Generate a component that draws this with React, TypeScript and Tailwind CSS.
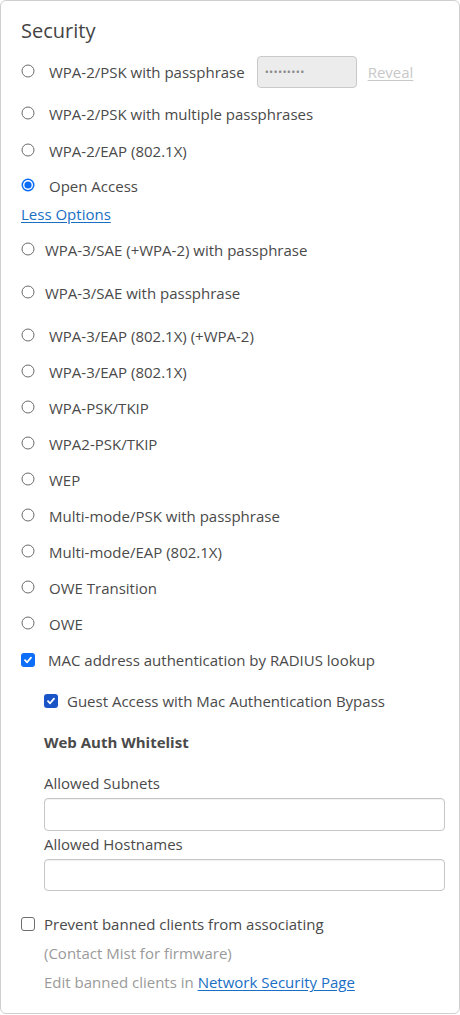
import React from "react";

const font = { fontFamily: '"Open Sans", "Noto Sans", sans-serif' };

function Radio({ checked = false }: { checked?: boolean }) {
  return (
    <svg width="14" height="14" viewBox="0 0 14 14" className="shrink-0 -translate-y-[1px]">
      {checked ? (
        <>
          <circle cx="7" cy="7" r="6.5" fill="#0a6cf5" />
          <circle cx="7" cy="7" r="5" fill="#fff" />
          <circle cx="7" cy="7" r="3.6" fill="#0a6cf5" />
        </>
      ) : (
        <circle cx="7" cy="7" r="6" fill="#fff" stroke="#6b6b6b" strokeWidth="1" />
      )}
    </svg>
  );
}

function Checkbox({ checked = false, dark = false }: { checked?: boolean; dark?: boolean }) {
  if (!checked) {
    return <span className="block h-[14px] w-[14px] shrink-0 rounded-[3px] border border-[#6f6f6f] bg-white" />;
  }
  return (
    <span
      className={`flex h-[14px] w-[14px] shrink-0 items-center justify-center rounded-[3px] ${
        dark ? "bg-[#1a55c8]" : "bg-[#0d6ef7]"
      }`}
    >
      <svg width="10" height="10" viewBox="0 0 10 10">
        <path d="M2 5.2 L4.1 7.3 L8 2.6" fill="none" stroke="#fff" strokeWidth="1.8" strokeLinecap="round" strokeLinejoin="round" />
      </svg>
    </span>
  );
}

const more = [
  { label: "WPA-3/SAE (+WPA-2) with passphrase", mt: "mt-[16px]", gap: "gap-[10px]" },
  { label: "WPA-3/SAE with passphrase", mt: "mt-[23px]", gap: "gap-[10px]" },
  { label: "WPA-3/EAP (802.1X) (+WPA-2)", mt: "mt-[23px]", gap: "gap-[14px]" },
  { label: "WPA-3/EAP (802.1X)", mt: "mt-[16px]", gap: "gap-[14px]" },
  { label: "WPA-PSK/TKIP", mt: "mt-[16px]", gap: "gap-[14px]" },
  { label: "WPA2-PSK/TKIP", mt: "mt-[16px]", gap: "gap-[14px]" },
  { label: "WEP", mt: "mt-[16px]", gap: "gap-[14px]" },
  { label: "Multi-mode/PSK with passphrase", mt: "mt-[16px]", gap: "gap-[14px]" },
  { label: "Multi-mode/EAP (802.1X)", mt: "mt-[16px]", gap: "gap-[14px]" },
  { label: "OWE Transition", mt: "mt-[16px]", gap: "gap-[14px]" },
  { label: "OWE", mt: "mt-[16px]", gap: "gap-[14px]" },
];

export default function App() {
  return (
    <div style={font} className="h-[1014px] w-[460px] bg-white">
      <div className="flex h-full flex-col rounded-[6px] border border-[#cfcfcf] pl-[20px] pt-[16px] text-[15px] text-[#4a4a4a]">
        <div className="h-[28px] text-[20px] leading-[28px] text-[#444]">Security</div>

        {/* main options */}
        <div className="mt-[11px] flex h-[32px] items-center gap-[14px]">
          <Radio />
          <span className="leading-[20px]">WPA-2/PSK with passphrase</span>
          <div className="-ml-[2px] flex h-[32px] w-[100px] items-center rounded-[4px] border border-[#c9c9c9] bg-[#ececec] pl-[7px] text-[11px] tracking-[0.3px] text-[#8a8a8a]">
            •••••••••
          </div>
          <span className="-ml-[3px] text-[#c8c8c8] underline underline-offset-2">Reveal</span>
        </div>
        <div className="mt-[16px] flex h-[20px] items-center gap-[14px]">
          <Radio />
          <span>WPA-2/PSK with multiple passphrases</span>
        </div>
        <div className="mt-[17px] flex h-[20px] items-center gap-[14px]">
          <Radio />
          <span>WPA-2/EAP (802.1X)</span>
        </div>
        <div className="mt-[15px] flex h-[20px] items-center gap-[14px]">
          <Radio checked />
          <span>Open Access</span>
        </div>
        <a className="mt-[8px] block h-[20px] leading-[20px] text-[#1a6fc4] underline underline-offset-2">Less Options</a>

        {more.map((o) => (
          <div key={o.label} className={`${o.mt} flex h-[20px] items-center ${o.gap}`}>
            <Radio />
            <span>{o.label}</span>
          </div>
        ))}

        {/* MAC auth */}
        <div className="mt-[16px] flex h-[20px] items-center gap-[13px]">
          <Checkbox checked />
          <span>MAC address authentication by RADIUS lookup</span>
        </div>
        <div className="ml-[23px] mt-[21px] flex h-[20px] items-center gap-[9px]">
          <Checkbox checked dark />
          <span>Guest Access with Mac Authentication Bypass</span>
        </div>

        <div className="ml-[23px] mr-[14px] flex flex-col">
          <div className="mt-[21px] h-[20px] font-bold leading-[20px]">Web Auth Whitelist</div>
          <div className="mt-[21px] h-[20px] leading-[20px]">Allowed Subnets</div>
          <div className="mt-[5px] h-[33px] rounded-[4px] border border-[#c6c6c6] bg-white shadow-[inset_0_1px_1px_rgba(0,0,0,0.06)]" />
          <div className="mt-[3px] h-[20px] leading-[20px]">Allowed Hostnames</div>
          <div className="mt-[5px] h-[32px] rounded-[4px] border border-[#c6c6c6] bg-white shadow-[inset_0_1px_1px_rgba(0,0,0,0.06)]" />
        </div>

        <div className="mt-[23px] flex h-[20px] items-center gap-[9px]">
          <Checkbox />
          <span>Prevent banned clients from associating</span>
        </div>
        <div className="ml-[23px] mt-[9px] h-[20px] leading-[20px] text-[#9a9a9a]">(Contact Mist for firmware)</div>
        <div className="ml-[23px] mt-[9px] h-[20px] leading-[20px] text-[#9a9a9a]">
          Edit banned clients in{" "}
          <a className="text-[#1a6fc4] underline underline-offset-2">Network Security Page</a>
        </div>
      </div>
    </div>
  );
}
